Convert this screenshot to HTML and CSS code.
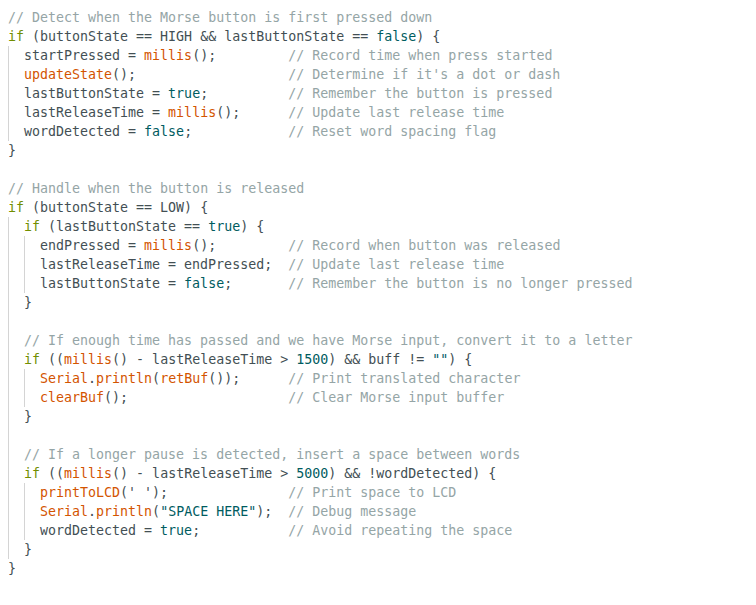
FILE: index.html
```html
<!DOCTYPE html>
<html>
<head>
<meta charset="utf-8">
<link rel="stylesheet" href="styles.css">
</head>
<body>
<div class="code">
<div class="ln"><span class="c">// Detect when the Morse button is first pressed down</span></div>
<div class="ln"><span class="k">if</span> (buttonState == HIGH &amp;&amp; lastButtonState == <span class="v">false</span>) {</div>
<div class="block">
<div class="ln">startPressed = <span class="f">millis</span>();         <span class="c">// Record time when press started</span></div>
<div class="ln"><span class="f">updateState</span>();                   <span class="c">// Determine if it's a dot or dash</span></div>
<div class="ln">lastButtonState = <span class="v">true</span>;          <span class="c">// Remember the button is pressed</span></div>
<div class="ln">lastReleaseTime = <span class="f">millis</span>();      <span class="c">// Update last release time</span></div>
<div class="ln">wordDetected = <span class="v">false</span>;            <span class="c">// Reset word spacing flag</span></div>
</div>
<div class="ln">}</div>
<div class="ln"> </div>
<div class="ln"><span class="c">// Handle when the button is released</span></div>
<div class="ln"><span class="k">if</span> (buttonState == LOW) {</div>
<div class="block">
<div class="ln"><span class="k">if</span> (lastButtonState == <span class="v">true</span>) {</div>
<div class="block">
<div class="ln">endPressed = <span class="f">millis</span>();         <span class="c">// Record when button was released</span></div>
<div class="ln">lastReleaseTime = endPressed;  <span class="c">// Update last release time</span></div>
<div class="ln">lastButtonState = <span class="v">false</span>;       <span class="c">// Remember the button is no longer pressed</span></div>
</div>
<div class="ln">}</div>
<div class="ln"> </div>
<div class="ln"><span class="c">// If enough time has passed and we have Morse input, convert it to a letter</span></div>
<div class="ln"><span class="k">if</span> ((<span class="f">millis</span>() - lastReleaseTime &gt; <span class="v">1500</span>) &amp;&amp; buff != <span class="v">""</span>) {</div>
<div class="block">
<div class="ln"><span class="f">Serial</span>.<span class="f">println</span>(<span class="f">retBuf</span>());      <span class="c">// Print translated character</span></div>
<div class="ln"><span class="f">clearBuf</span>();                    <span class="c">// Clear Morse input buffer</span></div>
</div>
<div class="ln">}</div>
<div class="ln"> </div>
<div class="ln"><span class="c">// If a longer pause is detected, insert a space between words</span></div>
<div class="ln"><span class="k">if</span> ((<span class="f">millis</span>() - lastReleaseTime &gt; <span class="v">5000</span>) &amp;&amp; !wordDetected) {</div>
<div class="block">
<div class="ln"><span class="f">printToLCD</span>(' ');               <span class="c">// Print space to LCD</span></div>
<div class="ln"><span class="f">Serial</span>.<span class="f">println</span>(<span class="v">"SPACE HERE"</span>);  <span class="c">// Debug message</span></div>
<div class="ln">wordDetected = <span class="v">true</span>;           <span class="c">// Avoid repeating the space</span></div>
</div>
<div class="ln">}</div>
</div>
<div class="ln">}</div>
</div>
</body>
</html>
```

FILE: styles.css
```css
html, body {
  margin: 0;
  padding: 0;
  background: #ffffff;
}

.code {
  padding: 8px 0 0 8px;
  font-family: "DejaVu Sans Mono", "Liberation Mono", monospace;
  font-size: 13.3px;
  color: #434f54;
}

.ln {
  height: 19px;
  line-height: 19px;
  white-space: pre;
}

.block {
  border-left: 1px solid #d4d4d4;
  padding-left: 15px;
}

.c { color: #95a5a6; }
.k { color: #728e00; }
.f { color: #d35400; }
.v { color: #005c5f; }
```
